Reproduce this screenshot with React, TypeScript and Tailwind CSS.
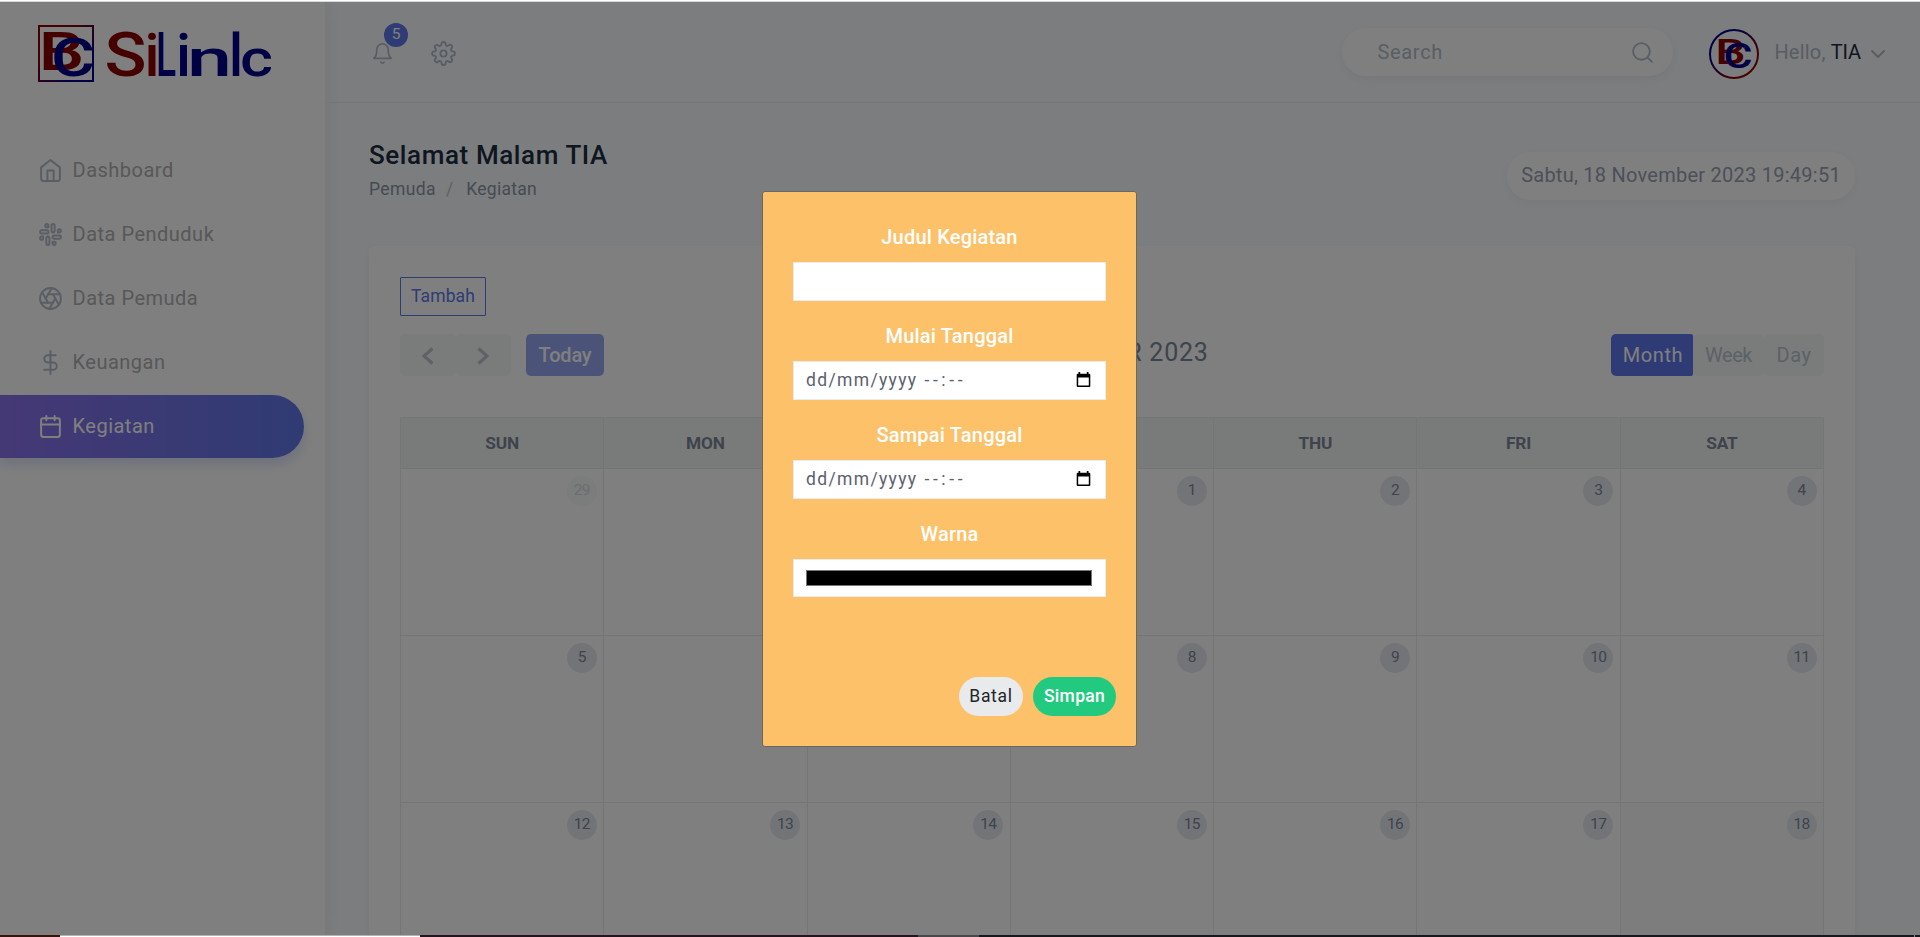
import type { ReactNode } from "react";
import type { IconType } from "react-icons";
import {
  FiAperture,
  FiBell,
  FiCalendar,
  FiChevronDown,
  FiDollarSign,
  FiHome,
  FiSearch,
  FiSettings,
  FiSlack,
} from "react-icons/fi";

const RED = "#8b0000";
const BLUE = "#00008b";

/* ---------- Logo ---------- */

type GlyphProps = { ch: string; x: number; y: number; w: number; size: number; color: string };

function Glyph({ ch, x, y, w, size, color }: GlyphProps) {
  return (
    <text
      x={x}
      y={y}
      textLength={w}
      lengthAdjust="spacingAndGlyphs"
      fontSize={size}
      fontWeight={500}
      fill={color}
      fontFamily="Roboto, sans-serif"
    >
      {ch}
    </text>
  );
}

function Monogram() {
  return (
    <>
      <Glyph ch="B" x={0.5} y={45} w={46} size={53} color={RED} />
      <Glyph ch="C" x={13} y={51} w={44} size={54} color={BLUE} />
    </>
  );
}

function Logo() {
  return (
    <svg width="236" height="60" viewBox="0 0 236 60" className="overflow-visible">
      <defs>
        <linearGradient id="frame" x1="0" y1="0" x2="1" y2="1">
          <stop offset="0.3" stopColor={RED} />
          <stop offset="0.8" stopColor={BLUE} />
        </linearGradient>
      </defs>
      <rect x="1" y="1" width="54" height="55" fill="none" stroke="url(#frame)" strokeWidth="2" />
      <Monogram />
      <Glyph ch="S" x={66.5} y={50.5} w={42} size={61} color={RED} />
      <Glyph ch="i" x={106.5} y={50.5} w={15} size={60} color={RED} />
      <Glyph ch="L" x={118} y={50.5} w={20} size={61} color={BLUE} />
      <Glyph ch="i" x={138} y={50.5} w={15} size={60} color={BLUE} />
      <Glyph ch="n" x={149} y={50.5} w={45} size={52} color={BLUE} />
      <Glyph ch="l" x={191} y={50.5} w={14} size={59} color={BLUE} />
      <Glyph ch="c" x={202} y={50.5} w={33} size={52} color={BLUE} />
    </svg>
  );
}

function Avatar() {
  return (
    <svg width="50" height="50" viewBox="0 0 50 50" className="overflow-visible">
      <defs>
        <linearGradient id="ring" x1="0" y1="0" x2="1" y2="1">
          <stop offset="0.25" stopColor={BLUE} />
          <stop offset="0.75" stopColor={RED} />
        </linearGradient>
      </defs>
      <circle cx="25" cy="25" r="24" fill="none" stroke="url(#ring)" strokeWidth="2" />
      <g transform="translate(6 5.500) scale(0.66)">
        <Monogram />
      </g>
    </svg>
  );
}

/* ---------- Sidebar ---------- */

type NavItem = { label: string; icon: IconType; active?: boolean };

const NAV: NavItem[] = [
  { label: "Dashboard", icon: FiHome },
  { label: "Data Penduduk", icon: FiSlack },
  { label: "Data Pemuda", icon: FiAperture },
  { label: "Keuangan", icon: FiDollarSign },
  { label: "Kegiatan", icon: FiCalendar, active: true },
];

function Sidebar() {
  return (
    <aside className="w-[325px] shrink-0 bg-white shadow-[1px_0_20px_rgba(0,0,0,0.08)]">
      <div className="h-[137px] pl-[38px] pt-[23px]">
        <Logo />
      </div>
      <nav className="flex flex-col gap-px">
        {NAV.map(({ label, icon: Icon, active }) => (
          <a
            key={label}
            className={
              active
                ? "flex h-[63px] w-[304px] items-center gap-[9.5px] rounded-r-[32px] bg-linear-to-r from-[#8971ea] to-[#5f76e8] pl-[38px] text-white shadow-[0_7px_12px_rgba(95,118,232,0.21)]"
                : "flex h-[63px] w-[304px] items-center gap-[9.5px] pl-[38px] text-[#b0b0b0]"
            }
          >
            <Icon size={25} strokeWidth={1.9} className={active ? "text-white" : "text-[#b3bdc9]"} />
            <span className="pb-px text-[20px] tracking-[0.5px]">{label}</span>
          </a>
        ))}
      </nav>
    </aside>
  );
}

/* ---------- Header ---------- */

function TopBar() {
  return (
    <header className="flex h-[101px] items-center justify-between border-b border-[#e9eef5] pl-[46px] pr-[30px]">
      <div className="flex items-center gap-[37px] pt-[2px]">
        <div className="relative text-[#b0bbcb]">
          <FiBell size={23} strokeWidth={1.8} />
          <span className="absolute -top-[19px] left-[13px] flex size-6 items-center justify-center rounded-full bg-[#5f76e8] text-[15.5px] text-white">
            5
          </span>
        </div>
        <FiSettings size={25} strokeWidth={1.8} className="text-[#b0bbcb]" />
      </div>
      <div className="flex items-center">
        <div className="mr-[36px] flex h-12 w-[331px] items-center justify-between rounded-full bg-white pl-[35px] pr-[18px] shadow-[0_3px_12px_rgba(0,0,0,0.06)]">
          <span className="text-[20px] tracking-[0.7px] text-[#b3bcca]">Search</span>
          <FiSearch size={25} strokeWidth={1.8} className="text-[#b3bcca]" />
        </div>
        <div className="pt-1">
          <Avatar />
        </div>
        <span className="ml-[15px] text-[20px] tracking-[0.2px] text-[#b0b9c7]">
          Hello, <span className="-tracking-[0.1px] text-[#1c2d41]">TIA</span>
        </span>
        <FiChevronDown size={24} strokeWidth={1.8} className="ml-[5px] mt-1 text-[#b0b9c7]" />
      </div>
    </header>
  );
}

function PageHeading() {
  return (
    <div className="flex justify-between">
      <div>
        <h1 className="text-[26px] font-medium leading-[36px] tracking-[0.6px] text-[#1c2d41]">Selamat Malam TIA</h1>
        <div className="flex text-[17.5px] leading-[32px] tracking-[0.4px] text-[#8a96a6]">
          <span>Pemuda</span>
          <span className="ml-[10px] text-[#b9c0ca]">/</span>
          <span className="ml-[12.5px] tracking-[0.3px]">Kegiatan</span>
        </div>
      </div>
      <div className="mt-[15px] flex h-12 w-[348px] items-center justify-center rounded-full bg-white pb-[3px] text-[20px] tracking-[0.25px] text-[#97a1b2] shadow-[0_3px_12px_rgba(0,0,0,0.05)]">
        Sabtu, 18 November 2023 19:49:51
      </div>
    </div>
  );
}

/* ---------- Calendar ---------- */

const DAYS = ["SUN", "MON", "TUE", "WED", "THU", "FRI", "SAT"];
const WEEKS = [
  [29, 30, 31, 1, 2, 3, 4],
  [5, 6, 7, 8, 9, 10, 11],
  [12, 13, 14, 15, 16, 17, 18],
];

function Arrow({ d }: { d: string }) {
  return (
    <span className="flex h-[42px] w-[55.5px] items-center justify-center rounded-[5px] bg-[#f4f9f6]">
      <svg width="12" height="18" viewBox="0 0 12 18" className="mt-[2px]">
        <path d={d} fill="none" stroke="#bac2d0" strokeWidth="3.2" />
      </svg>
    </span>
  );
}

function Toolbar() {
  return (
    <div className="mt-[18px] flex h-[42px] items-center text-[20px]">
      <div className="flex">
        <Arrow d="M10.500 1.500 L2 9 L10.500 16.500" />
        <Arrow d="M1.500 1.500 L10 9 L1.500 16.500" />
      </div>
      <span className="ml-[15px] flex h-[42px] w-[78px] items-center justify-center rounded-[5px] bg-[#98a7f0] font-medium -tracking-[0.2px] text-white">
        Today
      </span>
      <h2 className="flex-1 pb-[5px] pr-[2px] text-center text-[25px] tracking-[0.75px] text-[#7c8798]">NOVEMBER 2023</h2>
      <div className="flex">
        <span className="flex h-[42px] w-[82px] items-center justify-center rounded-[5px] rounded-r-[2px] bg-[#5f76e8] pl-[2px] tracking-[0.6px] text-white">
          Month
        </span>
        <span className="flex h-[42px] w-[71px] items-center justify-center rounded-[5px] bg-[#f4f9f6] -tracking-[0.4px] text-[#bac2d0]">
          Week
        </span>
        <span className="flex h-[42px] w-[60px] items-center justify-center rounded-[5px] bg-[#f4f9f6] tracking-[0.6px] text-[#bac2d0]">
          Day
        </span>
      </div>
    </div>
  );
}

function DayCell({ day, muted, today }: { day: number; muted: boolean; today: boolean }) {
  return (
    <div
      className={
        today
          ? "flex justify-end border-b border-r border-[#e8eaec] bg-[#fafafa] pr-[6.5px] pt-[7px]"
          : "flex justify-end border-b border-r border-[#e8eaec] pr-[6.5px] pt-[7px]"
      }
    >
      <span
        className={
          muted
            ? "flex size-[30px] items-center justify-center rounded-full bg-[#e5e9ee] pb-px text-[15.5px] -tracking-[0.7px] text-[#7c8798] opacity-30"
            : "flex size-[30px] items-center justify-center rounded-full bg-[#e5e9ee] pb-px text-[15.5px] -tracking-[0.7px] text-[#7c8798]"
        }
      >
        {day}
      </span>
    </div>
  );
}

function Calendar() {
  return (
    <section className="mt-[41px] h-[800px] rounded-[5px] bg-white px-[31px] pt-[31px] shadow-[0_3px_9px_rgba(162,176,190,0.15)]">
      <button className="flex h-[39px] w-[86px] items-center justify-center rounded-[1px] border border-[#5f76e8] text-[17.5px] tracking-[0.1px] text-[#5f76e8]">
        Tambah
      </button>
      <Toolbar />
      <div className="mt-[41px] w-[1424px] border-l border-t border-[#e8eaec]">
        <div className="grid h-[51px] grid-cols-7 bg-[#f2f7f4]">
          {DAYS.map((d) => (
            <div
              key={d}
              className="flex items-center justify-center border-b border-r border-[#e8eaec] pt-[2px] text-[17.3px] font-bold -tracking-[0.2px] text-[#7c8798]"
            >
              {d}
            </div>
          ))}
        </div>
        {WEEKS.map((week, row) => (
          <div key={row} className="grid h-[167px] grid-cols-7">
            {week.map((day) => (
              <DayCell key={day} day={day} muted={row === 0 && day > 20} today={day === 18} />
            ))}
          </div>
        ))}
      </div>
    </section>
  );
}

/* ---------- Modal ---------- */

function Field({ label, children }: { label: string; children?: ReactNode }) {
  return (
    <div className="mb-[20px]">
      <div className="mb-[10px] text-center text-[20px] font-medium leading-[30px] tracking-[0.2px] text-white">{label}</div>
      <div className="flex items-center justify-between border border-[#e9ecef] bg-white pl-3 pr-[13px]">{children}</div>
    </div>
  );
}

function DateTimeValue() {
  return (
    <>
      <span className="flex h-[37px] items-center text-[17.5px] text-[#5b6170]">
        <span className="tracking-[1.35px]">dd/mm/yyyy</span>
        <span className="ml-[7px] tracking-[3.6px]">--:--</span>
      </span>
      <svg width="15" height="16" viewBox="0 0 15 16" className="-mt-px mr-px">
        <path
          d="M2.500 0h1.700v1.700h6.600V0h1.700v1.700h.8a1 1 0 0 1 1 1v11.300a1 1 0 0 1-1 1H1.700a1 1 0 0 1-1-1V2.700a1 1 0 0 1 1-1h.8zM2.200 5.500v8h10.600v-8z"
          fill="#000"
          fillRule="evenodd"
        />
      </svg>
    </>
  );
}

function Modal() {
  return (
    <div className="flex h-[556px] w-[375px] flex-col rounded-[3px] border border-[#6b6864] bg-[#fdc16a] px-[30px] pt-[30px]">
      <Field label="Judul Kegiatan">
        <span className="h-[37px]" />
      </Field>
      <Field label="Mulai Tanggal">
        <DateTimeValue />
      </Field>
      <Field label="Sampai Tanggal">
        <DateTimeValue />
      </Field>
      <Field label="Warna">
        <span className="my-[10px] h-4 flex-1 border border-[#767676] bg-black" />
      </Field>
      <div className="-mr-[10px] mt-[60px] flex justify-end gap-[10px] text-[17.5px]">
        <button className="h-[39px] w-[64px] rounded-full bg-[#e8eaec] tracking-[0.7px] text-[#212529]">Batal</button>
        <button className="h-[39px] w-[83px] rounded-full bg-[#22ca80] font-medium tracking-[0.3px] text-white">Simpan</button>
      </div>
    </div>
  );
}

/* ---------- Page ---------- */

export default function App() {
  return (
    <div className="flex h-[937px] w-[1920px] flex-col overflow-hidden font-['Roboto',sans-serif]">
      <div className="h-[2px] shrink-0 border-b border-[#d3d9de] bg-white" />
      <div className="relative flex h-[933px] shrink-0 overflow-hidden bg-[#f9fbfd]">
        <Sidebar />
        <div className="min-w-0 flex-1">
          <TopBar />
          <main className="pl-[44px] pr-[65px] pt-[34px]">
            <PageHeading />
            <Calendar />
          </main>
        </div>
        <div className="absolute inset-0 flex items-start justify-center bg-black/50 pr-[21px] pt-[189px]">
          <Modal />
        </div>
      </div>
      <div className="flex h-[2px] shrink-0 bg-[#17181d]">
        <div className="w-[60px] bg-[#3a120c]" />
        <div className="w-[360px] border-t border-[#b5b2b2] bg-white" />
        <div className="w-[498px] bg-[#25141f]" />
        <div className="w-[61px] bg-[#4a474b]" />
        <div className="w-[935px]" />
        <div className="w-px bg-[#8a8c90]" />
      </div>
    </div>
  );
}
